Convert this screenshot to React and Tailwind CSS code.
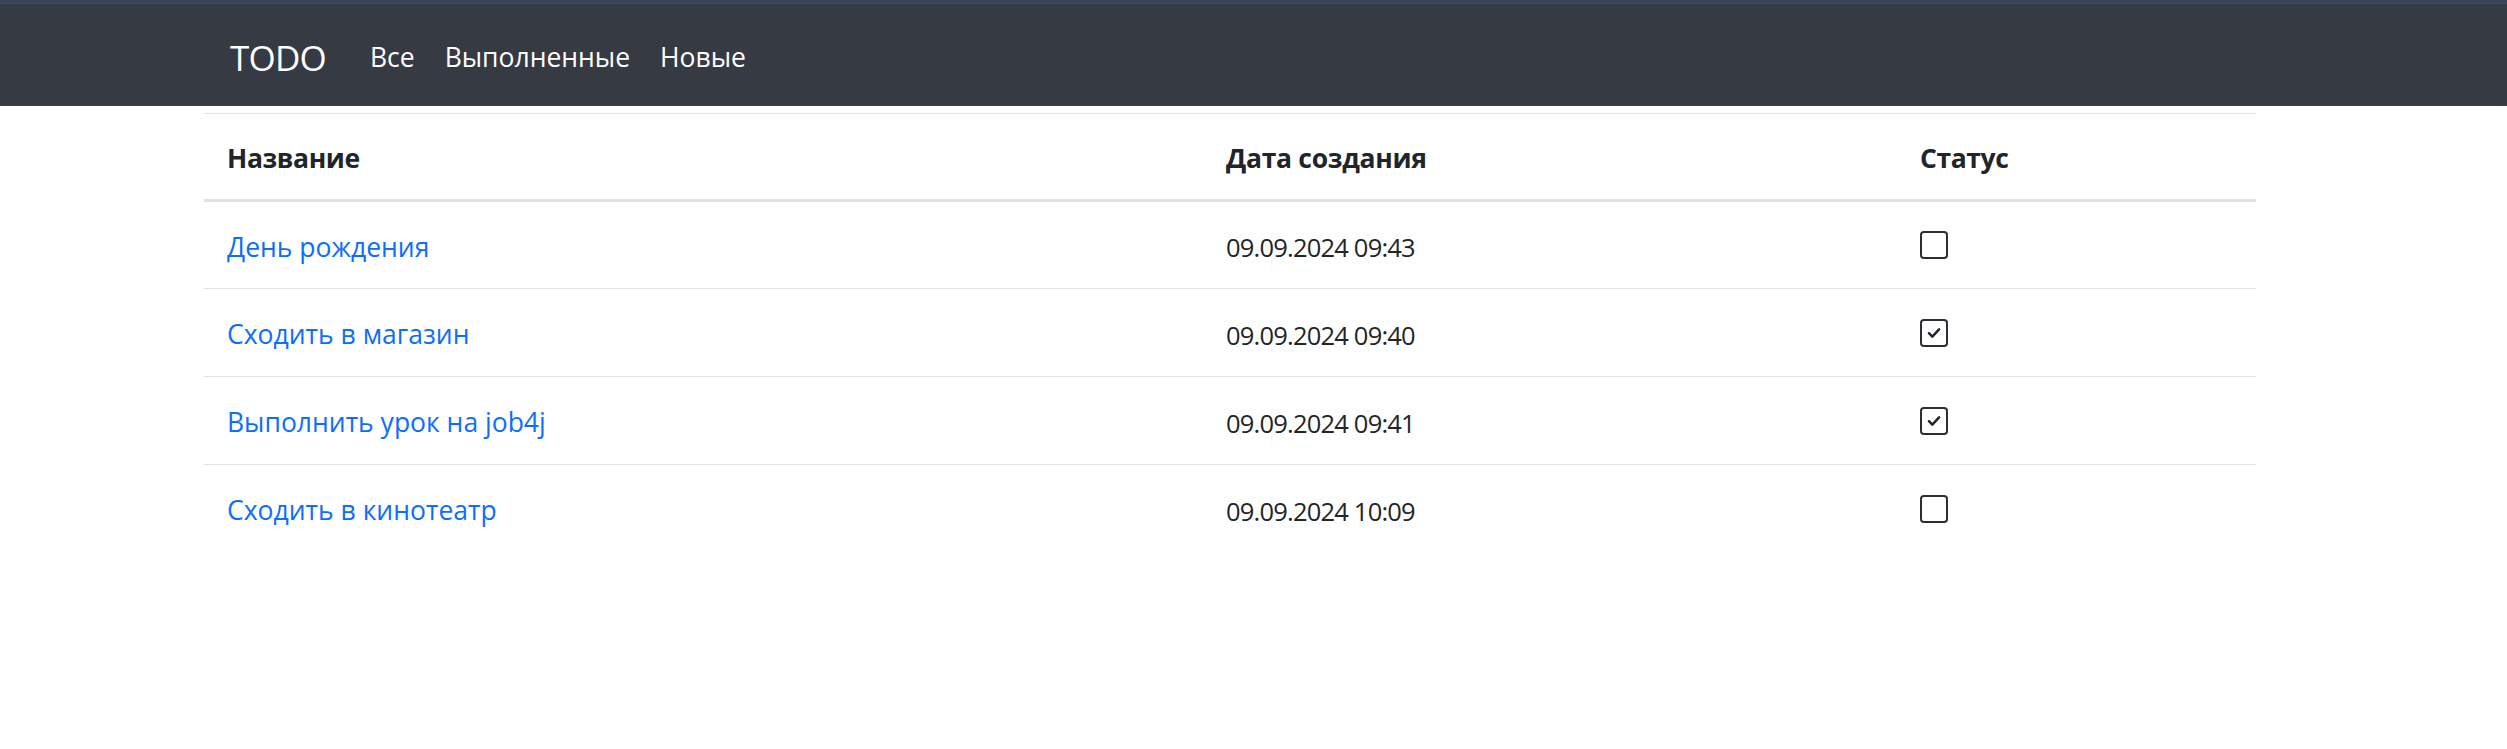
import React from 'react';

const tasks = [
  { id: 1, name: 'День рождения', created: '09.09.2024 09:43', done: false },
  { id: 2, name: 'Сходить в магазин', created: '09.09.2024 09:40', done: true },
  { id: 3, name: 'Выполнить урок на job4j', created: '09.09.2024 09:41', done: true },
  { id: 4, name: 'Сходить в кинотеатр', created: '09.09.2024 10:09', done: false },
];

const StatusBox = ({ done }) => (
  <div className="w-[28px] h-[28px] rounded-[4px] border-2 border-[#2b2f33] bg-white flex items-center justify-center">
    {done && (
      <svg width="18" height="18" viewBox="0 0 16 16" fill="none">
        <path d="M3.5 8.2l3 3 6-6.4" stroke="#212529" strokeWidth="2.2" strokeLinecap="round" strokeLinejoin="round" />
      </svg>
    )}
  </div>
);

const App = () => {
  return (
    <div className="min-h-[749px] bg-white text-[#212529] font-['Open_Sans','Noto_Sans',sans-serif]">
      <div className="h-[3px] bg-[#3a4358]" />
      <div className="h-[1px] bg-[#4a4f56]" />
      <nav className="h-[102px] bg-[#363a42] flex items-center pl-[230px] pt-[6px]">
        <a className="text-[35px] text-white mr-[44px] tracking-[-0.8px]">TODO</a>
        <div className="flex gap-[30px] text-[26.5px] text-white">
          <a>Все</a>
          <a>Выполненные</a>
          <a>Новые</a>
        </div>
      </nav>

      <div className="ml-[204px] w-[2052px] pt-[7px]">
        <table className="w-full border-collapse text-left text-[26.5px]">
          <thead>
            <tr className="h-[87px] border-t border-[#dee2e6] border-b-[3px] border-b-[#dee2e6]">
              <th className="w-[999px] pl-[23px] pt-[4px] font-bold tracking-[-0.4px]">Название</th>
              <th className="w-[694px] pl-[23px] pt-[4px] font-bold tracking-[-0.3px]">Дата создания</th>
              <th className="pl-[23px] pt-[4px] font-bold tracking-[-0.4px]">Статус</th>
            </tr>
          </thead>
          <tbody>
            {tasks.map((t, idx) => (
              <tr
                key={t.id}
                className={`h-[88px] ${idx < tasks.length - 1 ? 'border-b border-[#dee2e6]' : ''}`}
              >
                <td className="pl-[23px] pt-[5px]">
                  <a className="text-[#0d6efd] cursor-pointer">{t.name}</a>
                </td>
                <td className="pl-[23px] pt-[5px] text-[25.5px] tracking-[-0.8px]">{t.created}</td>
                <td className="pl-[23px]">
                  <StatusBox done={t.done} />
                </td>
              </tr>
            ))}
          </tbody>
        </table>
      </div>
    </div>
  );
};

export default App;
